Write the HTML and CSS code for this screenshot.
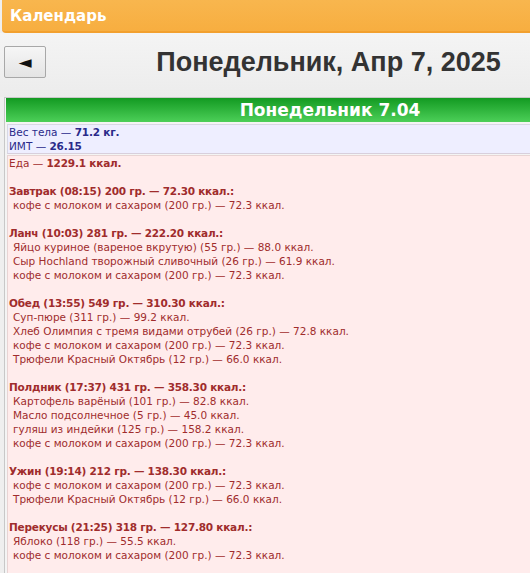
FILE: index.html
```html
<!DOCTYPE html>
<html lang="ru">
<head>
<meta charset="utf-8">
<link rel="stylesheet" href="styles.css">
</head>
<body>
<div class="topbar">Календарь</div>
<div class="nav">
  <button class="back">◄</button>
  <div class="title">Понедельник, Апр 7, 2025</div>
</div>
<div class="day">
  <div class="dayhead">Понедельник 7.04</div>
  <div class="body">Вес тела — <b>71.2 кг.</b><br>ИМТ — <b>26.15</b></div>
  <div class="food">
    <div>Еда — <b>1229.1 ккал.</b></div>
    <div class="meal">
      <div class="mh">Завтрак (08:15) 200 гр. — 72.30 ккал.:</div>
      <div class="it">кофе с молоком и сахаром (200 гр.) — 72.3 ккал.</div>
    </div>
    <div class="meal">
      <div class="mh">Ланч (10:03) 281 гр. — 222.20 ккал.:</div>
      <div class="it">Яйцо куриное (вареное вкрутую) (55 гр.) — 88.0 ккал.</div>
      <div class="it">Сыр Hochland творожный сливочный (26 гр.) — 61.9 ккал.</div>
      <div class="it">кофе с молоком и сахаром (200 гр.) — 72.3 ккал.</div>
    </div>
    <div class="meal">
      <div class="mh">Обед (13:55) 549 гр. — 310.30 ккал.:</div>
      <div class="it">Суп-пюре (311 гр.) — 99.2 ккал.</div>
      <div class="it">Хлеб Олимпия с тремя видами отрубей (26 гр.) — 72.8 ккал.</div>
      <div class="it">кофе с молоком и сахаром (200 гр.) — 72.3 ккал.</div>
      <div class="it">Трюфели Красный Октябрь (12 гр.) — 66.0 ккал.</div>
    </div>
    <div class="meal">
      <div class="mh">Полдник (17:37) 431 гр. — 358.30 ккал.:</div>
      <div class="it">Картофель варёный (101 гр.) — 82.8 ккал.</div>
      <div class="it">Масло подсолнечное (5 гр.) — 45.0 ккал.</div>
      <div class="it">гуляш из индейки (125 гр.) — 158.2 ккал.</div>
      <div class="it">кофе с молоком и сахаром (200 гр.) — 72.3 ккал.</div>
    </div>
    <div class="meal">
      <div class="mh">Ужин (19:14) 212 гр. — 138.30 ккал.:</div>
      <div class="it">кофе с молоком и сахаром (200 гр.) — 72.3 ккал.</div>
      <div class="it">Трюфели Красный Октябрь (12 гр.) — 66.0 ккал.</div>
    </div>
    <div class="meal">
      <div class="mh">Перекусы (21:25) 318 гр. — 127.80 ккал.:</div>
      <div class="it">Яблоко (118 гр.) — 55.5 ккал.</div>
      <div class="it">кофе с молоком и сахаром (200 гр.) — 72.3 ккал.</div>
    </div>
  </div>
</div>
</body>
</html>
```

FILE: styles.css
```css
html, body {
  margin: 0;
  padding: 0;
  background: #efefef;
  overflow: hidden;
}
body {
  width: 530px;
  height: 573px;
  font-family: "DejaVu Sans", Verdana, sans-serif;
}
.topbar {
  margin-left: 2px;
  height: 33px;
  box-sizing: border-box;
  padding: 7px 0 0 8px;
  background: linear-gradient(#f8b64e, #f7ae40);
  border-bottom: 2px solid #f2a02e;
  border-bottom-left-radius: 4px;
  color: #fff;
  font-weight: bold;
  font-size: 15px;
}
.nav {
  display: flex;
  align-items: flex-start;
  height: 64px;
  box-sizing: border-box;
  padding: 13px 0 0 4px;
  background: linear-gradient(#f4f4f4, #ececec);
}
.back {
  width: 42px;
  height: 32px;
  border: 1px solid #a8a8a8;
  border-radius: 2px;
  background: linear-gradient(#f6f6f6, #e4e4e4);
  font-size: 17px;
  color: #111;
  padding: 0;
  font-family: "DejaVu Sans", sans-serif;
}
.title {
  flex: 1;
  text-align: center;
  padding-left: 81px;
  margin-top: 1px;
  font-family: "Liberation Sans", Arial, sans-serif;
  font-weight: bold;
  font-size: 27px;
  color: #333;
}
.day {
  margin-left: 4px;
  border: 1px solid #c8c8c8;
  border-right: none;
  background: #f4f4f4;
  padding: 0 0 0 2px;
}
.dayhead {
  margin-left: -1px;
  height: 24px;
  box-sizing: border-box;
  background: linear-gradient(#139a22, #4ccf58);
  color: #fff;
  font-weight: bold;
  font-size: 17px;
  text-align: center;
  line-height: 24px;
  padding-left: 124px;
}
.body {
  margin-top: 2px;
  background: #eeeeff;
  border-top: 1px solid #d8d8e4;
  border-bottom: 1px solid #d8cfdc;
  border-left: 1px solid #d8d8e4;
  color: #2a2a8a;
  font-size: 10.5px;
  line-height: 14px;
  padding: 0 0 0 1px;
}
.body b {
  letter-spacing: -0.2px;
}
.food {
  margin-top: 1px;
  background: #ffecec;
  border-top: 1px solid #e8d4d4;
  border-left: 1px solid #e8d4d4;
  color: #a02c2c;
  font-size: 10.5px;
  line-height: 14px;
  padding: 0 0 40px 1px;
}
.food b {
  letter-spacing: -0.2px;
}
.meal {
  margin-top: 14px;
}
.mh {
  font-weight: bold;
  letter-spacing: -0.23px;
}
.it {
  padding-left: 4px;
}
```
